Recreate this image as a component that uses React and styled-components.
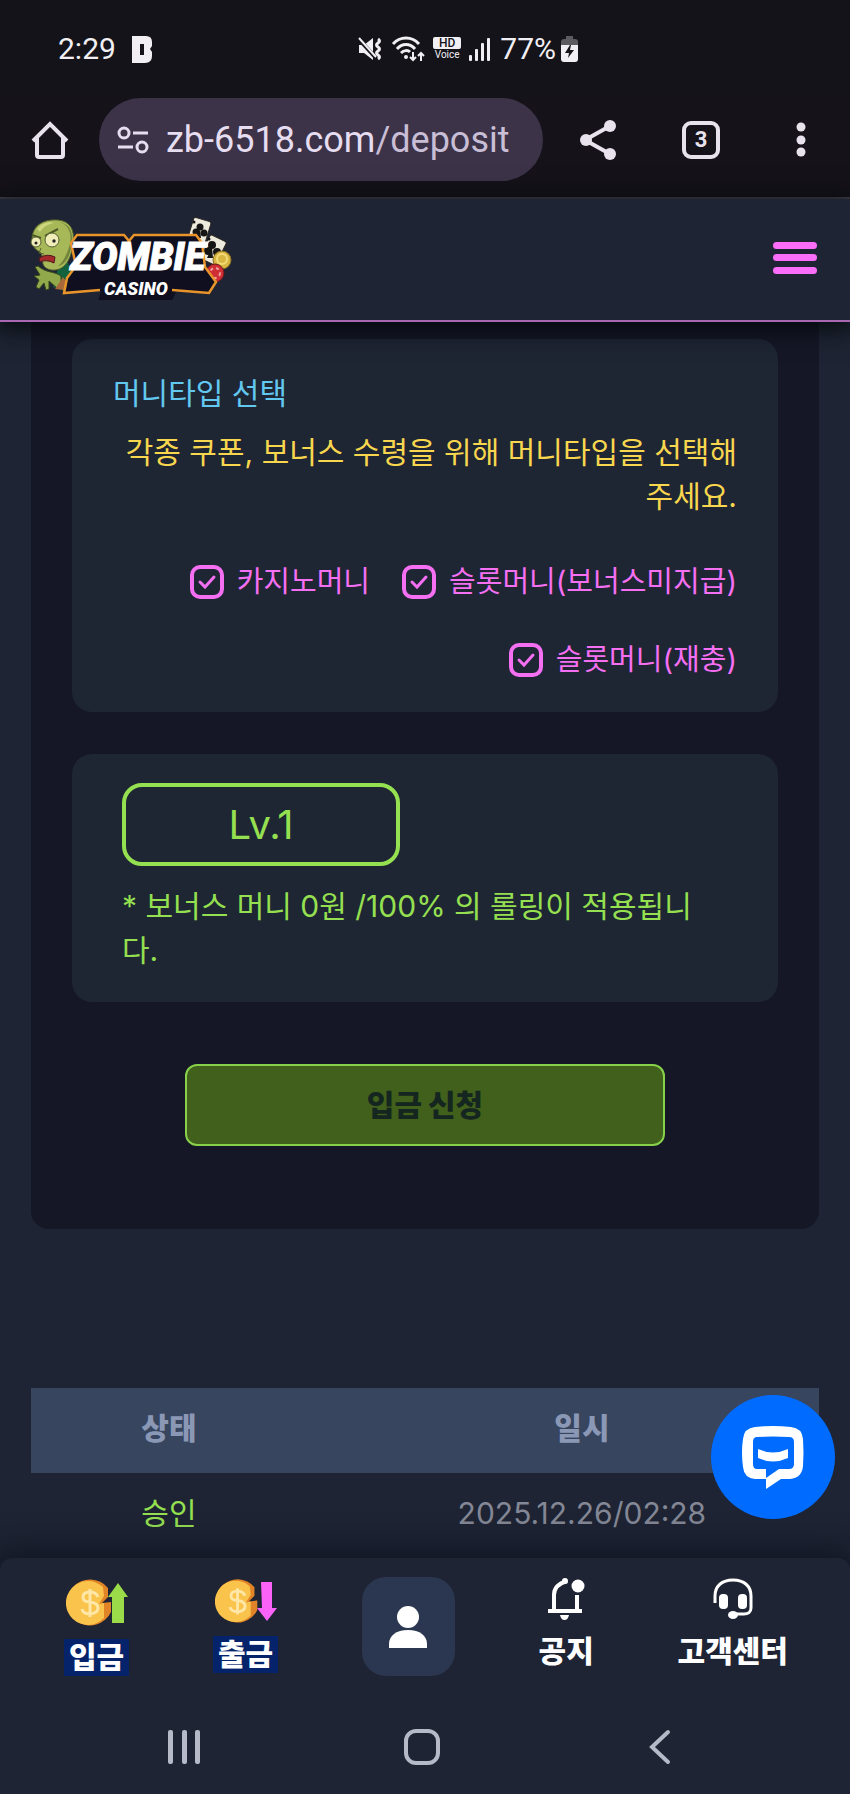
import React, { useState } from "react";
import styled, { createGlobalStyle, ThemeProvider } from "styled-components";

const theme = {
  colors: {
    chrome: "#15121a",
    pill: "#3c3348",
    light: "#e8e2ec",
    page: "#1e2433",
    panel: "#151726",
    card: "#1e2533",
    pink: "#f56ff3",
    blue: "#62c8f0",
    yellow: "#f8d74e",
    green: "#95e050",
    white: "#ffffff",
  },
  fontSize: {
    s: "29px",
    m: "30px",
    l: "36px",
    xl: "40px",
  },
};

const GlobalStyle = createGlobalStyle`
  * {
    box-sizing: border-box;
  }

  body {
    margin: 0;
    background-color: #1e2433;
    font-family: Inter, "Noto Sans CJK KR", sans-serif;
    font-size: 30px;
    line-height: 44px;
  }

  button {
    background: none;
    border: 0;
    color: inherit;
    cursor: pointer;
    font: inherit;
    padding: 0;
  }

  svg {
    display: block;
  }
`;

const Screen = styled.div`
  background-color: ${({ theme }) => theme.colors.page};
  display: flex;
  flex-direction: column;
  min-height: 100vh;
`;

const StatusBar = styled.div`
  align-items: center;
  background-color: #141319;
  color: #f1eff3;
  display: grid;
  font-family: Roboto, sans-serif;
  grid-template-columns: 299px auto;
  height: 98px;
  padding-left: 58px;
`;

const StatusGroup = styled.div`
  align-items: center;
  display: flex;
  gap: ${({ $gap }) => $gap}px;
`;

const Voice = styled.div`
  align-items: center;
  display: flex;
  flex-direction: column;
  font-size: 10px;
  line-height: 12px;

  span {
    background-color: #f1eff3;
    border-radius: 2px;
    color: #141319;
    font-size: 12px;
    font-weight: 500;
    padding: 0 6px;
  }
`;

const BrowserBar = styled.div`
  align-items: center;
  background-color: ${({ theme }) => theme.colors.chrome};
  border-bottom: 2px solid #45424c;
  color: ${({ theme }) => theme.colors.light};
  display: flex;
  padding: 0 27px 16px 31px;
`;

const Address = styled.button`
  align-items: center;
  background-color: ${({ theme }) => theme.colors.pill};
  border-radius: 42px;
  color: #e6ddf0;
  display: flex;
  flex: 1;
  font-family: Roboto, sans-serif;
  font-size: ${({ theme }) => theme.fontSize.l};
  gap: 17px;
  height: 83px;
  margin: 0 36px 0 30px;
  padding: 0 18px;
  white-space: nowrap;

  small {
    color: #c8bed6;
    font-size: inherit;
  }
`;

const BrowserActions = styled.div`
  align-items: center;
  display: flex;
  gap: 65px;
`;

const TabCount = styled.button`
  border: 4px solid currentColor;
  border-radius: 9px;
  font-family: Roboto, sans-serif;
  font-size: 22px;
  font-weight: 700;
  height: 38px;
  line-height: 28px;
  width: 38px;
`;

const Header = styled.header`
  align-items: center;
  border-bottom: 2px solid #aa68b4;
  box-shadow: 0 4px 22px 4px rgba(5, 8, 10, 0.85);
  background-color: ${({ theme }) => theme.colors.page};
  display: flex;
  height: 123px;
  justify-content: space-between;
  padding: 0 33px 4px 29px;
  position: relative;
`;

const Content = styled.main`
  flex: 1;
  padding: 0 31px;
`;

const Panel = styled.form`
  align-items: center;
  background-color: ${({ theme }) => theme.colors.panel};
  border-radius: 0 0 18px 18px;
  display: flex;
  flex-direction: column;
  gap: 42px;
  padding: 17px 41px 83px;
`;

const Card = styled.section`
  background-color: ${({ theme }) => theme.colors.card};
  border-radius: 20px;
  padding: ${({ $padding }) => $padding};
  width: 100%;
`;

const CardTitle = styled.h2`
  color: ${({ theme }) => theme.colors.blue};
  font-size: ${({ theme }) => theme.fontSize.m};
  font-weight: 400;
  margin: 0 0 15px;
`;

const Notice = styled.p`
  color: ${({ theme }) => theme.colors.yellow};
  margin: 0 0 42px;
  text-align: right;
`;

const Options = styled.div`
  display: flex;
  flex-wrap: wrap;
  gap: 34px 32px;
  justify-content: flex-end;
`;

const Option = styled.label`
  align-items: center;
  color: ${({ theme }) => theme.colors.pink};
  cursor: pointer;
  display: flex;
  font-size: ${({ theme }) => theme.fontSize.s};
  gap: 13px;
`;

const Tick = styled.span`
  display: grid;

  input,
  svg {
    grid-area: 1 / 1;
  }

  input {
    appearance: none;
    border: 4px solid currentColor;
    border-radius: 10px;
    color: inherit;
    cursor: pointer;
    height: 34px;
    margin: 0;
    width: 34px;
  }

  svg {
    pointer-events: none;
  }
`;

const Level = styled.div`
  border: 4px solid ${({ theme }) => theme.colors.green};
  border-radius: 20px;
  color: ${({ theme }) => theme.colors.green};
  font-size: ${({ theme }) => theme.fontSize.xl};
  line-height: 75px;
  margin-bottom: 18px;
  max-width: 278px;
  text-align: center;
`;

const Rolling = styled.p`
  color: ${({ theme }) => theme.colors.green};
  margin: 0;
  word-break: break-all;
`;

const Submit = styled.button`
  background-color: #41601c;
  border: 2px solid #86d04a;
  border-radius: 12px;
  color: #14261f;
  font-weight: 900;
  height: 82px;
  margin-top: 20px;
  width: 68%;
`;

const History = styled.table`
  border-collapse: collapse;
  margin-top: 159px;
  table-layout: fixed;
  text-align: center;
  width: 100%;

  th,
  td {
    height: 85px;
    padding: 0 0 6px;
  }

  th {
    background-color: #37455f;
    color: #8b98b5;
    font-weight: 900;
  }

  th:first-child {
    width: 35%;
  }

  th:last-child,
  td:last-child {
    padding-left: 38px;
  }
`;

const Status = styled.td`
  color: ${({ theme }) => theme.colors.green};
`;

const DateCell = styled.td`
  color: #848896;
`;

const ChatButton = styled.button`
  background-color: #006cff;
  border-radius: 50%;
  bottom: 275px;
  display: grid;
  height: 124px;
  place-items: center;
  position: fixed;
  right: 15px;
  width: 124px;
`;

const BottomNav = styled.nav`
  align-items: flex-start;
  background-color: ${({ theme }) => theme.colors.page};
  border-radius: 12px 12px 0 0;
  box-shadow: 0 0 32px 8px rgba(14, 18, 32, 0.8);
  display: flex;
  justify-content: space-between;
  padding: 19px 62px 24px 64px;
`;

const NavLink = styled.a`
  align-items: center;
  color: ${({ theme }) => theme.colors.white};
  display: flex;
  flex-direction: column;
  font-weight: 900;
  gap: 12px;
  line-height: 37px;
  text-decoration: none;

  span {
    background-color: ${({ $marked }) => ($marked ? "#05236a" : "transparent")};
    padding: ${({ $marked }) => ($marked ? "0 5px" : "0")};
  }
`;

const ProfileLink = styled.a`
  background-color: #2b3750;
  border-radius: 24px;
  display: grid;
  height: 99px;
  place-items: center;
  width: 93px;
`;

const SystemNav = styled.div`
  color: #b6b9c8;
  display: flex;
  height: 94px;
  justify-content: space-between;
  padding: 0 170px 0 165px;
  background-color: ${({ theme }) => theme.colors.page};
`;

const MuteIcon = () => (
  <svg width="26" height="26" viewBox="0 0 26 26" fill="none" stroke="currentColor" strokeWidth="2">
    <path d="M2 9h5l9-7v22l-9-7H2z" fill="currentColor" stroke="none" />
    <path d="M0 1l18 20" stroke="#141319" strokeWidth="4" />
    <path d="M2 2l17 19" />
    <path d="M21 3q3 2 0 4t0 4 0 4 0 4 0 4" strokeWidth="3" />
  </svg>
);

const WifiIcon = () => (
  <svg width="34" height="28" viewBox="0 0 34 28" fill="none" stroke="currentColor" strokeWidth="3">
    <path d="M2 9c7-8 19-8 26 0M6 14c5-6 13-6 18 0M10 18c3-3 7-3 9-1" />
    <circle cx="15" cy="22" r="2" fill="currentColor" stroke="none" />
    <path d="M22 17v8M19 22l3 3 3-3M30 26v-8M27 21l3-3 3 3" strokeWidth="2" />
  </svg>
);

const SignalIcon = () => (
  <svg width="23" height="25" viewBox="0 0 23 25" fill="currentColor">
    <rect x="0" y="18" width="3" height="6" rx="1" />
    <rect x="6" y="12" width="3" height="12" rx="1" />
    <rect x="12" y="6" width="3" height="18" rx="1" />
    <rect x="18" y="1" width="3" height="23" rx="1" />
  </svg>
);

const BatteryIcon = () => (
  <svg width="17" height="26" viewBox="0 0 17 26">
    <path d="M5 0h7v3h2c2 0 3 1 3 3v6H0V6c0-2 1-3 3-3h2z" fill="#5c5b60" />
    <path d="M0 9h17v14c0 2-1 3-3 3H3c-2 0-3-1-3-3z" fill="currentColor" />
    <path d="M9 9l-5 8h4l-1 5 6-8H9l1-5z" fill="#141319" />
  </svg>
);

const HomeIcon = () => (
  <svg width="38" height="40" viewBox="0 0 38 40" fill="none" stroke="currentColor" strokeWidth="4">
    <path d="M2 21L19 4l17 17M6 18v17q0 2 2 2h22q2 0 2-2V18" />
  </svg>
);

const TuneIcon = () => (
  <svg width="32" height="28" viewBox="0 0 32 28" fill="none" stroke="currentColor" strokeWidth="3">
    <circle cx="7" cy="7" r="5" />
    <path d="M16 7h15M1 21h15" />
    <circle cx="25" cy="21" r="5" />
  </svg>
);

const ShareIcon = () => (
  <svg width="38" height="42" viewBox="0 0 38 42" fill="currentColor">
    <path d="M31 7L6 21l25 14" fill="none" stroke="currentColor" strokeWidth="4" />
    <circle cx="31" cy="7" r="6" />
    <circle cx="7" cy="21" r="6" />
    <circle cx="31" cy="35" r="6" />
  </svg>
);

const DotsIcon = () => (
  <svg width="38" height="38" viewBox="0 0 38 38" fill="currentColor">
    <circle cx="16" cy="6" r="4.5" />
    <circle cx="16" cy="19" r="4.5" />
    <circle cx="16" cy="31" r="4.5" />
  </svg>
);

const MenuIcon = () => (
  <svg width="44" height="32" viewBox="0 0 44 32" fill="#f96df8">
    <rect width="44" height="7" rx="3.5" />
    <rect y="12" width="44" height="7" rx="3.5" />
    <rect y="25" width="44" height="7" rx="3.5" />
  </svg>
);

const LogoText = styled.text`
  fill: #fff;
  font-family: Roboto, sans-serif;
  font-style: italic;
  font-weight: 900;
  stroke: #fff;
`;

const Logo = () => (
  <svg width="204" height="84" viewBox="0 0 204 84" role="img" aria-label="Zombie Casino">
    {/* cards and chips */}
    <g fill="#ece9dd" stroke="#2b2722">
      <rect x="161" y="3" width="18" height="26" rx="2" transform="rotate(17 170 16)" />
      <rect x="175" y="21" width="18" height="26" rx="2" transform="rotate(26 184 34)" />
    </g>
    <g fill="#151515">
      <circle cx="171" cy="11" r="3.5" />
      <circle cx="167" cy="16" r="3.5" />
      <circle cx="175" cy="17" r="3.5" />
      <path d="M171 13l1 9h-5z" />
      <circle cx="183" cy="29" r="4" />
      <circle cx="179" cy="35" r="4" />
      <circle cx="188" cy="36" r="4" />
      <path d="M183 31l1 11h-6z" />
      <circle cx="165" cy="6" r="1.5" />
      <circle cx="180" cy="23" r="1.5" />
    </g>
    <circle cx="193" cy="44" r="9" fill="#d7b642" stroke="#8a6d22" />
    <circle cx="193" cy="43" r="5" fill="none" stroke="#f3dc78" strokeWidth="2" />
    <circle cx="186" cy="57" r="9" fill="#cf2f34" stroke="#6e171c" />
    <circle cx="186" cy="57" r="5" fill="none" stroke="#f0a19d" strokeWidth="2" strokeDasharray="3 3" />

    {/* zombie */}
    <path d="M29 52l9-8 8 24-8 8-14-5z" fill="#12633d" />
    <path
      d="M3 24C3 8 16 3 29 4c12 1 17 10 15 22-1 12-4 20-10 25-6 5-18 4-20-3-1-4 0-9-3-12-4-2-8-5-8-12z"
      fill="#a7b859"
      stroke="#515e2b"
    />
    <path d="M30 6c12 3 14 16 9 28-2 6-5 12-10 16 9-1 13-14 14-24S41 8 30 6z" fill="#74853c" />
    <path d="M8 13c4-5 11-8 17-6-6 1-11 4-14 9z" fill="#cdd77e" />
    <path d="M3 19l9 3M16 20l13-7" stroke="#4d5a27" strokeWidth="2" />
    <circle cx="7" cy="26" r="5" fill="#f0edb9" stroke="#535f2c" />
    <circle cx="23" cy="24" r="7" fill="#f0edb9" stroke="#535f2c" />
    <circle cx="7" cy="27" r="1.5" fill="#222" />
    <circle cx="25" cy="25" r="1.7" fill="#222" />
    <path d="M12 32l-2 5 5 1" fill="none" stroke="#56632d" />
    <path d="M10 42q8-5 16-1l-1 6q-8-4-14-1z" fill="#a52a2b" stroke="#51191c" />
    <path
      d="M32 60c-7-5-15-3-23-10l-3 1 5 8-6 1 5 4-3 7 3 2 5-6 2 7 3-1v-8l8 7 4-2z"
      fill="#92a94b"
      stroke="#36461f"
    />
    <path d="M34 61l10 14-18-2z" fill="#a8683a" />

    {/* plate */}
    <path
      d="M43 27l6-8h46l5 6 5-6h62l6 8 3 24 11 15-7 10H147l-4 9H69l3-10-36 1 3-13 9-16z"
      fill="#100f20"
    />
    <path
      d="M71 74l-36 3 3-15 9-12-5-23 6-8h47l5 6 5-6h62l6 8 3 24 11 15-7 11-37-3"
      fill="none"
      stroke="#e8942a"
      strokeWidth="2.5"
    />
    <LogoText x="41" y="54" fontSize="38" strokeWidth="1">
      ZOMBIE
    </LogoText>
    <LogoText x="75" y="79" fontSize="18" strokeWidth="0">
      CASINO
    </LogoText>
  </svg>
);

const ChatIcon = () => (
  <svg width="64" height="64" viewBox="0 0 64 64" fill="#fff">
    <path
      fillRule="evenodd"
      d="M14 2q18-2 36 0 11 1 12 12 1 14 0 27-1 12-13 13H40L25 64V54H14Q3 53 2 42 0 27 2 14 3 3 14 2zM16 12q-4 0-4 5v22q0 5 4 5h9v9l13-9h10q5 0 5-5V17q0-5-5-5-16-1-32 0z"
    />
    <path d="M17 24q15 7 30 0v9q-15 7-30 0z" />
  </svg>
);

const CoinIcon = ({ down, size }) => (
  <svg width="62" height={size} viewBox={`0 0 62 ${size}`}>
    <g transform={down ? "scale(0.94)" : undefined}>
      <path d="M42 11A23 23 0 1 0 45 35V25l-9 1 6-6z" fill="#e18428" />
      <path d="M37 10A22 22 0 1 0 38 41V26l-5 1 5-8z" fill="#fac34b" />
      <path
        d="M32 20q-2-5-8-5-7 0-7 5 0 5 7 5 8 1 8 6t-8 6q-7 0-8-5M24 12v28"
        fill="none"
        stroke="#ffe7a7"
        strokeWidth="3"
      />
    </g>
    {down ? (
      <path d="M46 5h11v26h5L52 44 42 31h5z" fill="#fb62f7" />
    ) : (
      <path d="M52 6l10 14h-4v26H46V20h-4z" fill="#9bdb49" />
    )}
  </svg>
);

const UserIcon = () => (
  <svg width="38" height="44" viewBox="0 0 38 44" fill="#fff">
    <circle cx="19" cy="12" r="11" />
    <path d="M0 43v-4c0-8 7-14 19-14s19 6 19 14v4z" />
  </svg>
);

const BellIcon = () => (
  <svg width="38" height="44" viewBox="0 0 38 44" fill="#fff">
    <path
      d="M20 4c-7 2-13 6-13 14v15M30 18v15M1 34h34"
      fill="none"
      stroke="#fff"
      strokeWidth="4"
    />
    <circle cx="18" cy="4" r="3" />
    <circle cx="31" cy="9" r="6.5" />
    <path d="M13 38h9q-1 5-4.5 5T13 38z" />
  </svg>
);

const HeadsetIcon = () => (
  <svg width="40" height="44" viewBox="0 0 40 44" fill="#fff">
    <path
      d="M2 26v-7C2 9 9 3 20 3s18 6 18 16v12c0 4-3 6-7 6H21"
      fill="none"
      stroke="#fff"
      strokeWidth="3"
    />
    <rect x="6" y="17" width="9" height="15" rx="4" />
    <rect x="25" y="17" width="9" height="15" rx="4" />
    <ellipse cx="20" cy="38" rx="5" ry="4" />
  </svg>
);

const moneyTypes = [
  { id: "casino", label: "카지노머니" },
  { id: "slot", label: "슬롯머니(보너스미지급)" },
  { id: "slot-refill", label: "슬롯머니(재충)" },
];

const MoneyOption = ({ label }) => {
  const [checked, setChecked] = useState(true);

  return (
    <Option>
      <Tick>
        <input
          type="checkbox"
          checked={checked}
          onChange={(event) => setChecked(event.target.checked)}
        />
        {checked && (
          <svg width="34" height="34" viewBox="0 0 34 34" fill="none" stroke="currentColor">
            <path d="M10 17l5 5 9-10" strokeWidth="3" strokeLinecap="round" />
          </svg>
        )}
      </Tick>
      {label}
    </Option>
  );
};

const App = () => (
  <ThemeProvider theme={theme}>
    <GlobalStyle />
    <Screen>
      <StatusBar>
        <StatusGroup $gap={16}>
          <span>2:29</span>
          <svg width="21" height="27" viewBox="0 0 21 27">
            <path
              fillRule="evenodd"
              fill="currentColor"
              d="M0 0h14q6 0 6 6v4l-2 3 2 3v4q0 7-7 7H0zM8 8v11h4V8z"
            />
          </svg>
        </StatusGroup>
        <StatusGroup $gap={8}>
          <MuteIcon />
          <WifiIcon />
          <Voice>
            <span>HD</span>
            Voice
          </Voice>
          <SignalIcon />
          <StatusGroup $gap={5}>
            77%
            <BatteryIcon />
          </StatusGroup>
        </StatusGroup>
      </StatusBar>
      <BrowserBar>
        <button type="button" aria-label="Home">
          <HomeIcon />
        </button>
        <Address type="button">
          <TuneIcon />
          <span>
            zb-6518.com<small>/deposit</small>
          </span>
        </Address>
        <BrowserActions>
          <button type="button" aria-label="Share">
            <ShareIcon />
          </button>
          <TabCount type="button">3</TabCount>
          <button type="button" aria-label="More">
            <DotsIcon />
          </button>
        </BrowserActions>
      </BrowserBar>
      <Header>
        <a href="#home">
          <Logo />
        </a>
        <button type="button" aria-label="Menu">
          <MenuIcon />
        </button>
      </Header>
      <Content>
        <Panel onSubmit={(event) => event.preventDefault()}>
          <Card $padding="32px 41px 30px">
            <CardTitle>머니타입 선택</CardTitle>
            <Notice>각종 쿠폰, 보너스 수령을 위해 머니타입을 선택해주세요.</Notice>
            <Options>
              {moneyTypes.map(({ id, label }) => (
                <MoneyOption key={id} label={label} />
              ))}
            </Options>
          </Card>
          <Card $padding="29px 70px 30px 50px">
            <Level>Lv.1</Level>
            <Rolling>* 보너스 머니 0원 /100% 의 롤링이 적용됩니다.</Rolling>
          </Card>
          <Submit type="submit">입금 신청</Submit>
        </Panel>
        <History>
          <thead>
            <tr>
              <th scope="col">상태</th>
              <th scope="col">일시</th>
            </tr>
          </thead>
          <tbody>
            <tr>
              <Status>승인</Status>
              <DateCell>2025.12.26/02:28</DateCell>
            </tr>
          </tbody>
        </History>
      </Content>
      <BottomNav>
        <NavLink href="#deposit" $marked>
          <CoinIcon size={50} />
          <span>입금</span>
        </NavLink>
        <NavLink href="#withdraw" $marked>
          <CoinIcon down size={47} />
          <span>출금</span>
        </NavLink>
        <ProfileLink href="#profile" aria-label="Profile">
          <UserIcon />
        </ProfileLink>
        <NavLink href="#notice">
          <BellIcon />
          <span>공지</span>
        </NavLink>
        <NavLink href="#support">
          <HeadsetIcon />
          <span>고객센터</span>
        </NavLink>
      </BottomNav>
      <SystemNav>
        <button type="button" aria-label="Recent apps">
          <svg width="38" height="36" viewBox="0 0 38 36" fill="currentColor">
            <rect x="3" y="1" width="5" height="34" rx="2" />
            <rect x="17" y="1" width="5" height="34" rx="2" />
            <rect x="30" y="1" width="5" height="34" rx="2" />
          </svg>
        </button>
        <button type="button" aria-label="Home screen">
          <svg width="38" height="38" viewBox="0 0 38 38">
            <rect x="2" y="3" width="32" height="32" rx="10" fill="none" stroke="currentColor" strokeWidth="4" />
          </svg>
        </button>
        <button type="button" aria-label="Back">
          <svg width="38" height="36" viewBox="0 0 38 36">
            <path d="M26 3L10 18l16 15" fill="none" stroke="currentColor" strokeWidth="4" strokeLinecap="round" />
          </svg>
        </button>
      </SystemNav>
      <ChatButton type="button" aria-label="Chat">
        <ChatIcon />
      </ChatButton>
    </Screen>
  </ThemeProvider>
);

export default App;
